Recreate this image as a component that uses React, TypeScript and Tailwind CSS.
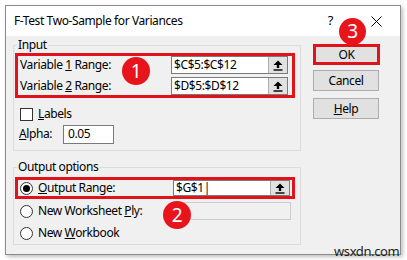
import React from "react";

const font = { fontFamily: '"Noto Sans", "Open Sans", sans-serif', letterSpacing: "-0.4px" };

function Upload() {
  return (
    <div className="w-[19px] h-full bg-[#e1e1e1] border-l border-[#adadad] flex items-center justify-center">
      <svg width="10" height="11" viewBox="0 0 10 11">
        <path d="M5 0.5 L9.5 5 H6.2 V8 H3.8 V5 H0.5 Z" fill="#000" />
        <rect x="0.5" y="9.3" width="9" height="1.4" fill="#000" />
      </svg>
    </div>
  );
}

function RefField({ value, h = "h-[18px]" }: { value: string; h?: string }) {
  return (
    <div className={`flex ${h} w-[117px] border border-[#7a7a7a] bg-white`}>
      <div className="flex-1 flex items-center pl-[2px] text-[12px] leading-none text-black">{value}</div>
      <Upload />
    </div>
  );
}

function Radio({ checked }: { checked?: boolean }) {
  return (
    <div className="w-[13px] h-[13px] rounded-full border border-[#333] bg-white flex items-center justify-center">
      {checked && <div className="w-[7px] h-[7px] rounded-full bg-black" />}
    </div>
  );
}

function Circle({ n, cls }: { n: string; cls: string }) {
  return (
    <div
      className={`absolute rounded-full bg-[#e8141c] text-white flex items-center justify-center text-[19px] leading-none ${cls}`}
      style={{ fontFamily: '"Noto Sans", sans-serif' }}
    >
      {n}
    </div>
  );
}

export default function App() {
  return (
    <div className="relative w-[407px] h-[260px] bg-white pt-[5px] pl-[5px] text-[12px] text-black" style={font}>
      <div className="w-[396px] h-[250px] border border-[#8c8c8c] bg-[#f0f0f0] shadow-[2px_2px_4px_rgba(0,0,0,0.25)] flex flex-col">
        <div className="h-[30px] bg-white flex items-center pl-[8px] shrink-0">
          <span className="text-[12px]">F-Test Two-Sample for Variances</span>
          <span className="ml-auto text-[13px] mr-[38px]">?</span>
          <svg width="11" height="11" viewBox="0 0 11 11" className="mr-[18px]">
            <path d="M0.5 0.5 L10.5 10.5 M10.5 0.5 L0.5 10.5" stroke="#000" strokeWidth="1" />
          </svg>
        </div>
        <div className="flex flex-1">
          <div className="ml-[7px] w-[288px] flex flex-col">
            <fieldset className="mt-[2px] h-[113px] border border-[#dcdcdc] flex flex-col">
              <legend className="ml-[3px] px-[1px] leading-[14px]">Input</legend>
              <div className="ml-[1px] mt-[1px] w-[280px] h-[45px] border-[3px] border-[#e0121a] flex flex-col justify-between py-0">
                <div className="flex items-center h-[18px]">
                  <span className="pl-[2px] w-[153px]">
                    Variable <span className="underline">1</span> Range:
                  </span>
                  <RefField value="$C$5:$C$12" />
                </div>
                <div className="flex items-center h-[18px]">
                  <span className="pl-[2px] w-[153px]">
                    Variable <span className="underline">2</span> Range:
                  </span>
                  <RefField value="$D$5:$D$12" />
                </div>
              </div>
              <div className="flex items-center mt-[9px] ml-[6px] h-[14px]">
                <div className="w-[13px] h-[13px] border border-[#333] bg-white" />
                <span className="ml-[5px]">
                  <span className="underline">L</span>abels
                </span>
              </div>
              <div className="flex items-center mt-[4px] ml-[5px] h-[18px]">
                <span className="w-[44px]">
                  <span className="underline">A</span>lpha:
                </span>
                <div className="w-[51px] h-[19px] border border-[#7a7a7a] bg-white flex items-center pl-[4px]">0.05</div>
              </div>
            </fieldset>
            <fieldset className="mt-[9px] h-[85px] border border-[#dcdcdc] flex flex-col">
              <legend className="ml-[3px] px-[1px] leading-[14px]">Output options</legend>
              <div className="ml-[1px] mt-[3px] w-[280px] h-[22px] border-[3px] border-[#e0121a] flex items-center">
                <div className="ml-[2px]">
                  <Radio checked />
                </div>
                <span className="ml-[5px] w-[135px]">
                  <span className="underline">O</span>utput Range:
                </span>
                <RefField value="$G$1|" h="h-[16px]" />
              </div>
              <div className="ml-[6px] mt-[2px] h-[20px] flex items-center">
                <Radio />
                <span className="ml-[5px] w-[135px]">
                  New Worksheet <span className="underline">P</span>ly:
                </span>
                <div className="w-[118px] h-[18px] border border-[#cccccc] bg-[#f0f0f0]" />
              </div>
              <div className="ml-[6px] mt-[2px] h-[20px] flex items-center">
                <Radio />
                <span className="ml-[5px]">
                  New <span className="underline">W</span>orkbook
                </span>
              </div>
            </fieldset>
          </div>
          <div className="ml-[12px] flex flex-col">
            <div className="mt-[8px] w-[67px] h-[21px] border-[3px] border-[#e0121a] bg-[#e1e1e1] flex items-center justify-center">
              OK
            </div>
            <div className="mt-[5px] w-[66px] h-[21px] border border-[#adadad] bg-[#e1e1e1] flex items-center justify-center">
              Cancel
            </div>
            <div className="mt-[7px] w-[66px] h-[21px] border border-[#adadad] bg-[#e1e1e1] flex items-center justify-center">
              <span>
                <span className="underline">H</span>elp
              </span>
            </div>
          </div>
        </div>
      </div>
      <Circle n="1" cls="left-[122px] top-[57px] w-[28px] h-[28px]" />
      <Circle n="2" cls="left-[163px] top-[201px] w-[28px] h-[28px]" />
      <Circle n="3" cls="left-[339px] top-[18px] w-[27px] h-[27px]" />
      <div className="absolute left-[334px] top-[244px] text-[13px] leading-[14px] text-[#222]">wsxdn.com</div>
    </div>
  );
}
